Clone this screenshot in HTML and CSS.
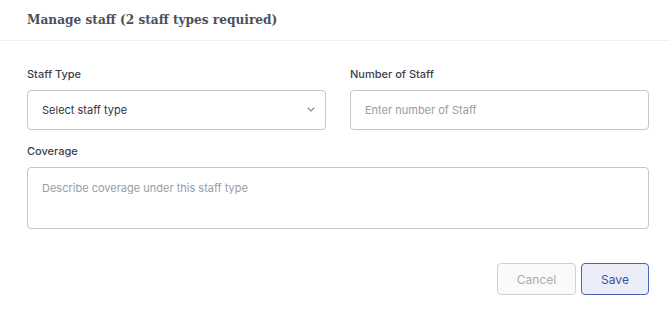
FILE: index.html
```html
<!DOCTYPE html>
<html>
<head>
<meta charset="utf-8">
<link rel="stylesheet" href="styles.css">
</head>
<body>
<div class="modal">
  <div class="header"><h2 class="title">Manage staff (2 staff types required)</h2></div>
  <div class="body">
    <div class="row">
      <div class="field">
        <label class="label">Staff Type</label>
        <div class="select">
          <span class="select-text">Select staff type</span>
          <svg class="chev" width="8" height="5" viewBox="0 0 8 5"><path d="M1 1l3 3 3-3" fill="none" stroke="#8a8f9c" stroke-width="1.2" stroke-linecap="round" stroke-linejoin="round"/></svg>
        </div>
      </div>
      <div class="field">
        <label class="label">Number of Staff</label>
        <div class="input"><span class="ph">Enter number of Staff</span></div>
      </div>
    </div>
    <div class="field">
      <label class="label">Coverage</label>
      <div class="textarea"><span class="ph">Describe coverage under this staff type</span></div>
    </div>
    <div class="actions">
      <button class="btn cancel">Cancel</button>
      <button class="btn save">Save</button>
    </div>
  </div>
</div>
</body>
</html>
```
FILE: styles.css
```css
* { box-sizing: border-box; }
html, body { margin: 0; padding: 0; background: #fff; }
body { font-family: Inter, "Noto Sans", sans-serif; width: 670px; height: 314px; overflow: hidden; }
.header { height: 41px; border-bottom: 1px solid #eeeff1; padding: 9px 27px 0; }
.title { margin: 0; font-family: "DejaVu Serif", serif; font-weight: bold; font-size: 13.5px; font-stretch: condensed; color: #4b4f5d; line-height: 20px; letter-spacing: 0; }
.body { padding: 25px 21px 0 27px; display: flex; flex-direction: column; }
.row { display: grid; grid-template-columns: 299px 299px; column-gap: 24px; }
.field { display: flex; flex-direction: column; }
.label { font-size: 11px; font-weight: 500; color: #3b3f4c; line-height: 16px; margin-bottom: 8px; }
.select, .input { height: 40px; border: 1px solid #c6c6c9; border-radius: 4px; display: flex; align-items: center; padding: 0 14px; }
.select { justify-content: space-between; padding-right: 10px; }
.select-text { font-size: 11px; color: #2f3340; }
.chev { margin-top: -2px; }
.ph { font-size: 11px; color: #9a9ca5; }
.row + .field { margin-top: 13px; }
.textarea { height: 62px; border: 1px solid #c6c6c9; border-radius: 4px; padding: 13px 14px; display: flex; align-items: flex-start; }
.actions { display: flex; justify-content: flex-end; gap: 5px; margin-top: 34px; }
.btn { height: 32px; border-radius: 4px; font-family: Inter, sans-serif; font-size: 12px; padding: 0; }
.cancel { width: 79px; background: #fafafa; border: 1px solid #cfd0d3; color: #a9abb2; }
.save { width: 68px; background: #ebeef8; border: 1px solid #4b62b3; color: #3d51a3; }
```
